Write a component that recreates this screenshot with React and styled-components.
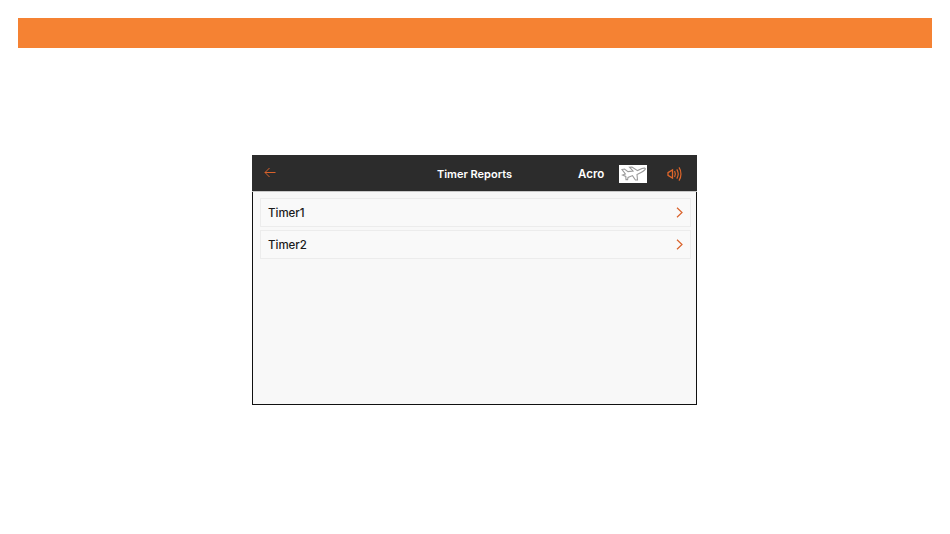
import React from "react"
import styled, { createGlobalStyle } from "styled-components"

const GlobalStyle = createGlobalStyle`
  html, body {
    margin: 0;
    padding: 0;
    background: #fff;
    font-family: "Inter", "Liberation Sans", sans-serif;
  }
`

export default function App() {
  return (
    <>
      <GlobalStyle />
      <Page>
        <Banner />
        <Screen>
          <Header>
            <BackButton>
              <svg width="12" height="11" viewBox="0 0 12 11" fill="none" stroke="#d9622b" strokeWidth="1">
                <path d="M11.5 5.5H1M5.5 1 1 5.5 5.5 10" />
              </svg>
            </BackButton>
            <Title>Timer Reports</Title>
            <Mode>Acro</Mode>
            <PlaneBadge>
              <svg width="25" height="15" viewBox="0 0 25 15" fill="none" stroke="#9a9a9a" strokeWidth="1.1">
                <path d="M1 3.5 3.5 3 7 5.6 12 5 8.5 1.2 11 1 16.5 4.6 21 2.6C23 1.8 24.5 2 24.3 3 24 4.2 22 5.4 20 6.4L16 8.6 16.5 14 14.4 14 11.5 9.6 7 11.4 6.6 13.6 5 13.6 4.8 10.4 1.6 9 4.4 8 1 3.5Z" />
              </svg>
            </PlaneBadge>
            <Speaker>
              <svg width="15" height="16" viewBox="0 0 15 16" fill="none" stroke="#e0662a">
                <path d="M1 6.6 5.5 4V12L1 9.4Z" strokeWidth="1.3" />
                <path d="M7.6 5C8.6 7 8.6 9 7.6 11" strokeWidth="1.2" />
                <path d="M9.8 3.4C11.4 6 11.4 10 9.8 12.6" strokeWidth="1.2" />
                <path d="M12 1.4C14.6 5.2 14.6 10.8 12 14.6" strokeWidth="1.2" />
              </svg>
            </Speaker>
          </Header>
          <List>
            <Row>
              <RowLabel>Timer1</RowLabel>
              <Chevron />
            </Row>
            <Row>
              <RowLabel>Timer2</RowLabel>
              <Chevron />
            </Row>
          </List>
        </Screen>
      </Page>
    </>
  )
}

function Chevron() {
  return (
    <svg width="7" height="11" viewBox="0 0 7 11" fill="none" stroke="#d9622b" strokeWidth="1.2">
      <path d="M1 .8 6 5.5 1 10.2" />
    </svg>
  )
}

const Page = styled.div`
  box-sizing: border-box;
  width: 950px;
  height: 534px;
  padding: 18px;
  overflow: hidden;
`

const Banner = styled.div`
  height: 30px;
  background: #f58233;
`

const Screen = styled.div`
  box-sizing: border-box;
  width: 445px;
  height: 250px;
  margin: 107px 0 0 234px;
  background: #f8f8f8;
  border: 1px solid #111;
`

const Header = styled.div`
  display: flex;
  align-items: center;
  height: 35px;
  margin: -1px -1px 0;
  padding-top: 1px;
  background: #2c2c2c;
  color: #fff;
  border-bottom: 1px solid #c9c9c9;
  box-sizing: content-box;
`

const BackButton = styled.div`
  display: flex;
  width: 163px;
  padding: 0 0 2px 12px;
  box-sizing: border-box;
`

const Title = styled.div`
  width: 101px;
  margin-left: 9px;
  font-size: 11px;
  font-weight: 600;
  text-align: center;
`

const Mode = styled.div`
  width: 26px;
  margin-left: 53px;
  font-size: 11.5px;
  font-weight: 600;
  text-align: center;
`

const PlaneBadge = styled.div`
  display: flex;
  align-items: center;
  justify-content: center;
  width: 28px;
  height: 18px;
  margin-left: 15px;
  background: #fff;
`

const Speaker = styled.div`
  display: flex;
  margin-left: 20px;
`

const List = styled.div`
  display: flex;
  flex-direction: column;
  gap: 3px;
  padding: 6px 5px 0 7px;
`

const Row = styled.div`
  box-sizing: border-box;
  display: flex;
  align-items: center;
  justify-content: space-between;
  height: 29px;
  padding: 0 7px;
  background: #f9f9f9;
  border: 1px solid #ececec;
`

const RowLabel = styled.span`
  font-size: 11.5px;
  font-weight: 500;
  color: #1a1a1a;
`
